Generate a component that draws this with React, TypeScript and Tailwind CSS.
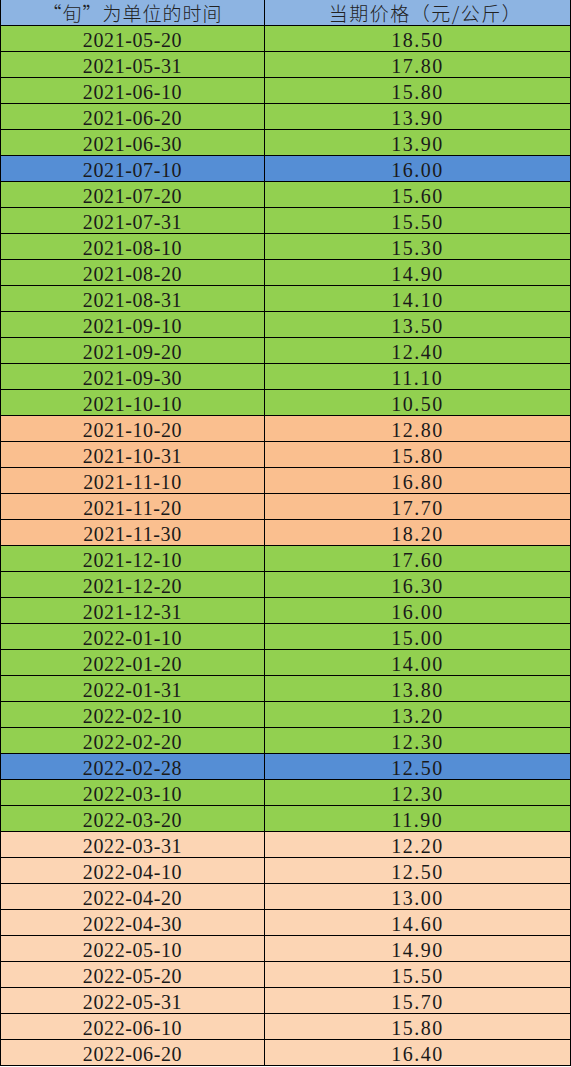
const rows: [string, string, string][] = [
  ["2021-05-20", "18.50", "g"],
  ["2021-05-31", "17.80", "g"],
  ["2021-06-10", "15.80", "g"],
  ["2021-06-20", "13.90", "g"],
  ["2021-06-30", "13.90", "g"],
  ["2021-07-10", "16.00", "b"],
  ["2021-07-20", "15.60", "g"],
  ["2021-07-31", "15.50", "g"],
  ["2021-08-10", "15.30", "g"],
  ["2021-08-20", "14.90", "g"],
  ["2021-08-31", "14.10", "g"],
  ["2021-09-10", "13.50", "g"],
  ["2021-09-20", "12.40", "g"],
  ["2021-09-30", "11.10", "g"],
  ["2021-10-10", "10.50", "g"],
  ["2021-10-20", "12.80", "o"],
  ["2021-10-31", "15.80", "o"],
  ["2021-11-10", "16.80", "o"],
  ["2021-11-20", "17.70", "o"],
  ["2021-11-30", "18.20", "o"],
  ["2021-12-10", "17.60", "g"],
  ["2021-12-20", "16.30", "g"],
  ["2021-12-31", "16.00", "g"],
  ["2022-01-10", "15.00", "g"],
  ["2022-01-20", "14.00", "g"],
  ["2022-01-31", "13.80", "g"],
  ["2022-02-10", "13.20", "g"],
  ["2022-02-20", "12.30", "g"],
  ["2022-02-28", "12.50", "b"],
  ["2022-03-10", "12.30", "g"],
  ["2022-03-20", "11.90", "g"],
  ["2022-03-31", "12.20", "p"],
  ["2022-04-10", "12.50", "p"],
  ["2022-04-20", "13.00", "p"],
  ["2022-04-30", "14.60", "p"],
  ["2022-05-10", "14.90", "p"],
  ["2022-05-20", "15.50", "p"],
  ["2022-05-31", "15.70", "p"],
  ["2022-06-10", "15.80", "p"],
  ["2022-06-20", "16.40", "p"],
];

const bg: Record<string, string> = {
  g: "bg-[#92d050]",
  b: "bg-[#558ed5]",
  o: "bg-[#fabf8f]",
  p: "bg-[#fcd5b4]",
};

export default function App() {
  return (
    <div className="w-[571px] h-[1067px] bg-white font-['Liberation_Serif','Noto_Sans_CJK_SC',serif] text-[20px] text-[#1a1a1a]">
      <div className="flex h-[26px] bg-[#8db4e2] text-[19px] font-['Noto_Sans_CJK_SC',sans-serif] font-light leading-[22px] text-[#222]">
        <div className="w-[265px] border-l border-r border-b border-black flex items-center justify-center tracking-[1px]">
          <span className="leading-[22px]">“旬”为单位的时间</span>
        </div>
        <div className="w-[306px] border-r border-b border-black flex items-center justify-center pl-[16px] tracking-[1.5px]">
          <span className="leading-[22px]">当期价格（元/公斤）</span>
        </div>
      </div>
      {rows.map(([date, price, c]) => (
        <div key={date} className={`flex h-[26px] leading-[26px] ${bg[c]}`}>
          <div className="w-[265px] border-l border-r border-b border-black flex items-center justify-center pt-[2px] tracking-[0.6px]">
            {date}
          </div>
          <div className="w-[306px] border-r border-b border-black flex items-center justify-center pt-[2px] tracking-[1.5px]">
            {price}
          </div>
        </div>
      ))}
    </div>
  );
}
